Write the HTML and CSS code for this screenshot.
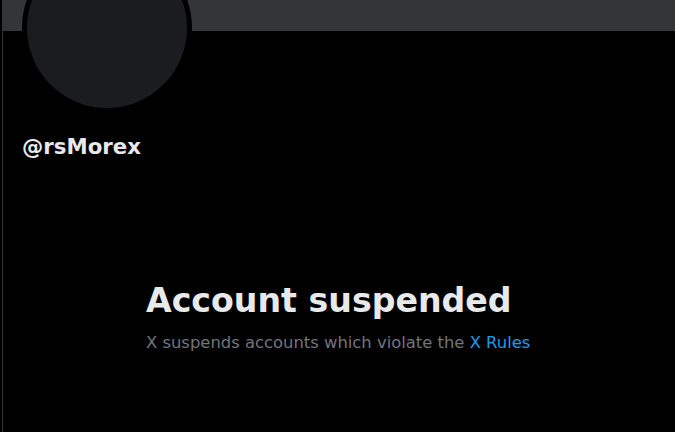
FILE: index.html
```html
<!DOCTYPE html>
<html>
<head>
<meta charset="utf-8">
<link rel="stylesheet" href="styles.css">
</head>
<body>
<main class="column">
  <div class="banner"></div>
  <div class="avatar"><div class="avatar-inner"></div></div>
  <div class="handle">@rsMorex</div>
  <section class="empty">
    <h1 class="title">Account suspended</h1>
    <p class="sub">X suspends accounts which violate the <a class="link" href="#">X Rules</a></p>
  </section>
</main>
</body>
</html>
```
FILE: styles.css
```css
html, body {
  margin: 0;
  padding: 0;
  background: #000;
  height: 100%;
  overflow: hidden;
}
.column {
  margin-left: 2px;
  border-left: 1px solid #2f3336;
  min-height: 100%;
  font-family: "DejaVu Sans", sans-serif;
  color: #e7e9ea;
}
.banner {
  height: 31px;
  background: #333639;
}
.avatar {
  width: 160px;
  height: 160px;
  margin: -88px 0 0 19px;
  border: 5px solid #000;
  border-radius: 50%;
  background: #1a1c1f;
  position: relative;
}
.handle {
  margin: 22px 0 0 19px;
  font-weight: bold;
  font-size: 21.3px;
  line-height: 24px;
}
.empty {
  width: 386px;
  margin: 122px auto 0;
}
.title {
  margin: 0;
  font-size: 33.2px;
  line-height: 40px;
  font-weight: bold;
  white-space: nowrap;
}
.sub {
  margin: 12px 0 0;
  font-size: 16.4px;
  line-height: 20px;
  color: #71767b;
  white-space: nowrap;
}
.link {
  color: #1d9bf0;
  text-decoration: none;
}
```
